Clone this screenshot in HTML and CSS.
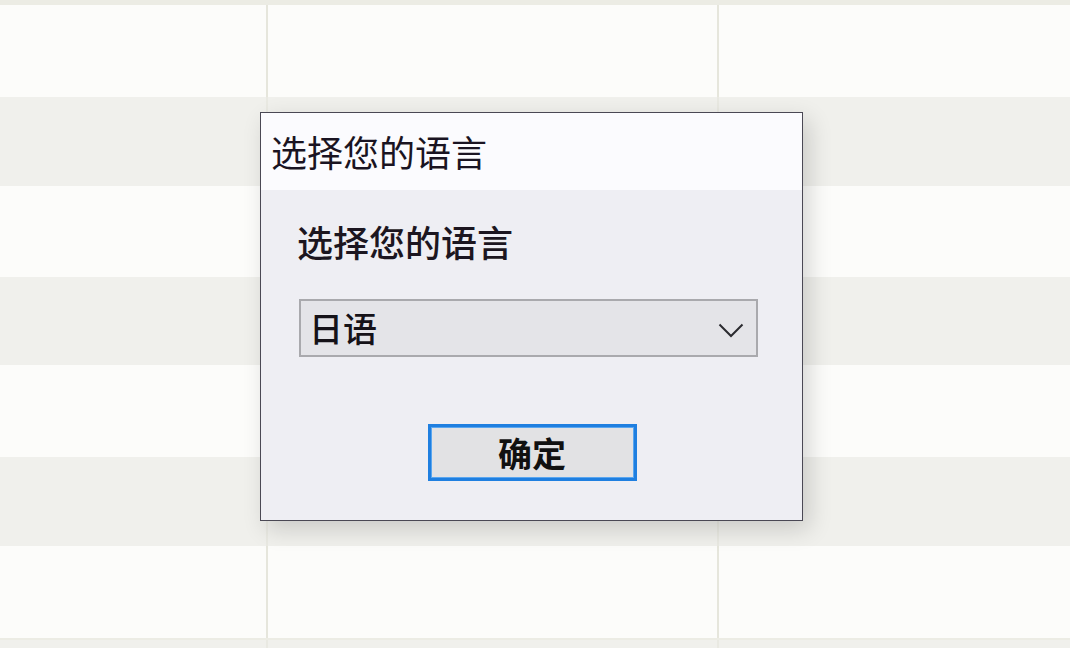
FILE: index.html
```html
<!DOCTYPE html>
<html lang="zh-CN">
<head>
<meta charset="utf-8">
<title>选择您的语言</title>
<link rel="stylesheet" href="styles.css">
</head>
<body>
<div class="sheet">
  <div class="edge"></div>
  <div class="row light h92"><div class="cell"></div><div class="cell"></div><div class="cell"></div></div>
  <div class="row shade h89"><div class="cell"></div><div class="cell"></div><div class="cell"></div></div>
  <div class="row light h91"><div class="cell"></div><div class="cell"></div><div class="cell"></div></div>
  <div class="row shade h88"><div class="cell"></div><div class="cell"></div><div class="cell"></div></div>
  <div class="row light h92"><div class="cell"></div><div class="cell"></div><div class="cell"></div></div>
  <div class="row shade h89"><div class="cell"></div><div class="cell"></div><div class="cell"></div></div>
  <div class="row light h92"><div class="cell"></div><div class="cell"></div><div class="cell"></div></div>
  <div class="edge small"></div>
  <div class="row shade h8"><div class="cell"></div><div class="cell"></div><div class="cell"></div></div>
</div>

<div class="dialog">
  <div class="titlebar">选择您的语言</div>
  <div class="content">
    <div class="label">选择您的语言</div>
    <div class="select">
      <span class="value">日语</span>
      <svg class="chev" width="26" height="15" viewBox="0 0 26 15"><path d="M1.5 1.5 L13 13 L24.5 1.5" fill="none" stroke="#2b2b30" stroke-width="2"/></svg>
    </div>
    <div class="actions">
      <button class="ok">确定</button>
    </div>
  </div>
</div>
</body>
</html>
```

FILE: styles.css
```css
html, body {
  margin: 0;
  padding: 0;
}
body {
  width: 1070px;
  height: 648px;
  overflow: hidden;
  background: #f0f0ec;
  font-family: "Noto Sans CJK SC", "Noto Sans", sans-serif;
  position: relative;
}
.sheet {
  display: flex;
  flex-direction: column;
}
.edge {
  height: 5px;
  background: #ecece4;
}
.edge.small {
  height: 2px;
}
.row {
  display: grid;
  grid-template-columns: 266px 451px 1fr;
}
.row .cell + .cell {
  border-left: 2px solid #e6e6dc;
}
.row.light { background: #fcfcfa; }
.row.shade { background: #f0f0ec; }
.row.shade .cell + .cell { border-left-color: #e9e9e2; }
.h92 { height: 92px; }
.h91 { height: 91px; }
.h89 { height: 89px; }
.h88 { height: 88px; }
.h8 { height: 8px; }

.dialog {
  position: absolute;
  left: 260px;
  top: 112px;
  width: 541px;
  height: 407px;
  border: 1px solid #4a4854;
  background: #eeeef3;
  box-shadow: 6px 8px 22px rgba(0, 0, 0, 0.16);
  display: flex;
  flex-direction: column;
}
.titlebar {
  height: 77px;
  background: #fbfbfe;
  color: #1a1422;
  font-size: 36px;
  line-height: 76px;
  padding-left: 10px;
}
.content {
  flex: 1;
  padding: 26px 44px 0 38px;
  display: flex;
  flex-direction: column;
}
.label {
  font-size: 36px;
  font-weight: 500;
  color: #1c1620;
  line-height: 50px;
  margin-left: -2px;
}
.select {
  margin-top: 33px;
  height: 54px;
  border: 2px solid #a9a9ad;
  background: #e4e4e8;
  display: flex;
  align-items: center;
  justify-content: space-between;
  padding: 0 12px 0 8px;
}
.value {
  font-size: 34px;
  color: #151218;
  line-height: 54px;
  font-weight: 500;
}
.chev {
  margin-top: 4px;
}
.actions {
  display: flex;
  justify-content: center;
  margin-top: 67px;
}
.ok {
  width: 209px;
  height: 57px;
  border: 3px solid #1f7fe0;
  box-shadow: inset 0 0 0 1px #5aa6ef;
  background: #e2e2e4;
  font-family: "Noto Sans CJK SC", "Noto Sans", sans-serif;
  font-size: 34px;
  font-weight: 700;
  color: #111;
  padding: 0;
  line-height: 1;
  margin-left: 7px;
}
```
